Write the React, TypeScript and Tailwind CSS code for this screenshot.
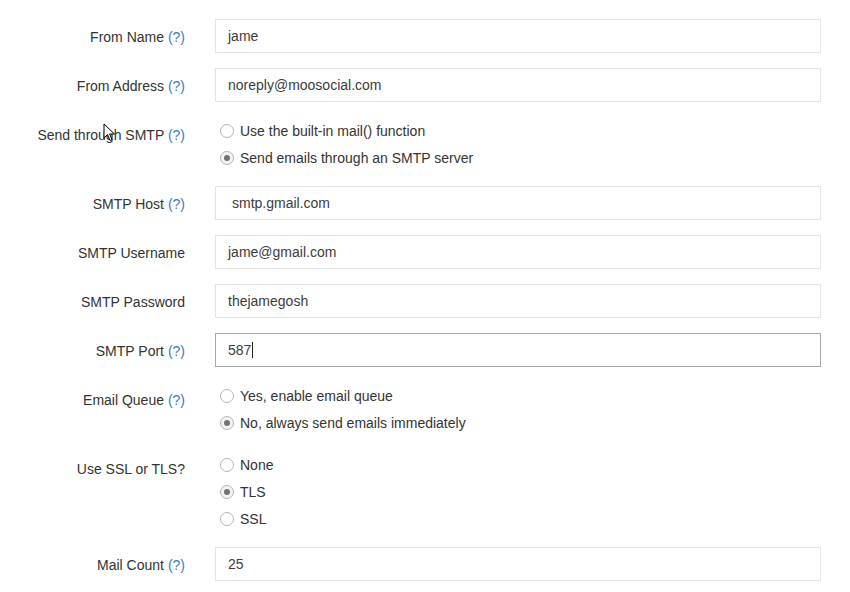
import React from 'react';

const font = { fontFamily: '"Liberation Sans", Arial, sans-serif' };

function Help() {
  return <span className="text-[#3a7cc0]">(?)</span>;
}

function Label({ text, help }: { text: string; help?: boolean }) {
  return (
    <div className="w-[185px] shrink-0 pt-[10px] text-right text-[14px] leading-[17px] text-[#333]">
      {text} {help && <Help />}
    </div>
  );
}

function TextRow({ label, help, value, active, indent }: { label: string; help?: boolean; value: string; active?: boolean; indent?: boolean }) {
  return (
    <div className="flex gap-[30px]">
      <Label text={label} help={help} />
      <div
        className={`flex h-[34px] flex-1 items-center border bg-white text-[14px] text-[#3c3c3c] ${
          active ? 'border-[#a9a9a9]' : 'border-[#e3e3e3]'
        } ${indent ? 'pl-[16px]' : 'pl-[12px]'}`}
      >
        {value}
        {active && <span className="ml-[1px] inline-block h-[16px] w-px bg-[#222]" />}
      </div>
    </div>
  );
}

function Radio({ label, checked }: { label: string; checked?: boolean }) {
  return (
    <div className="flex h-[27px] items-center gap-[6px] pl-[5px] pt-[1px] text-[14px] text-[#333]">
      <span
        className={`flex h-[14px] w-[14px] items-center justify-center rounded-full border border-[#b5b5b5] ${
          checked ? 'bg-[#f3f3f3]' : 'bg-white'
        }`}
      >
        {checked && <span className="h-[6px] w-[6px] rounded-full bg-[#727272]" />}
      </span>
      {label}
    </div>
  );
}

function RadioRow({ label, help, options, selected }: { label: string; help?: boolean; options: string[]; selected: number }) {
  return (
    <div className="flex gap-[30px]">
      <Label text={label} help={help} />
      <div className="flex flex-1 flex-col">
        {options.map((o, i) => (
          <Radio key={o} label={o} checked={i === selected} />
        ))}
      </div>
    </div>
  );
}

export default function App() {
  return (
    <div className="relative min-h-[592px] w-[850px] bg-white pt-[19px] pr-[29px]" style={font}>
      <div className="flex flex-col gap-[15px]">
        <TextRow label="From Name" help value="jame" />
        <TextRow label="From Address" help value="noreply@moosocial.com" />
        <RadioRow
          label="Send through SMTP"
          help
          options={['Use the built-in mail() function', 'Send emails through an SMTP server']}
          selected={1}
        />
        <TextRow label="SMTP Host" help value="smtp.gmail.com" indent />
        <TextRow label="SMTP Username" value="jame@gmail.com" />
        <TextRow label="SMTP Password" value="thejamegosh" />
        <TextRow label="SMTP Port" help value="587" active />
        <RadioRow
          label="Email Queue"
          help
          options={['Yes, enable email queue', 'No, always send emails immediately']}
          selected={1}
        />
        <RadioRow label="Use SSL or TLS?" options={['None', 'TLS', 'SSL']} selected={1} />
        <TextRow label="Mail Count" help value="25" />
      </div>

      {/* mouse pointer */}
      <svg className="absolute left-[103px] top-[123px]" width="14" height="20" viewBox="0 0 14 20">
        <path d="M1 1 L1 15 L4.5 11.5 L7 17.5 L9 16.6 L6.6 11 L11.5 11 Z" fill="#fff" stroke="#000" strokeWidth="1" strokeLinejoin="round" />
      </svg>
    </div>
  );
}
